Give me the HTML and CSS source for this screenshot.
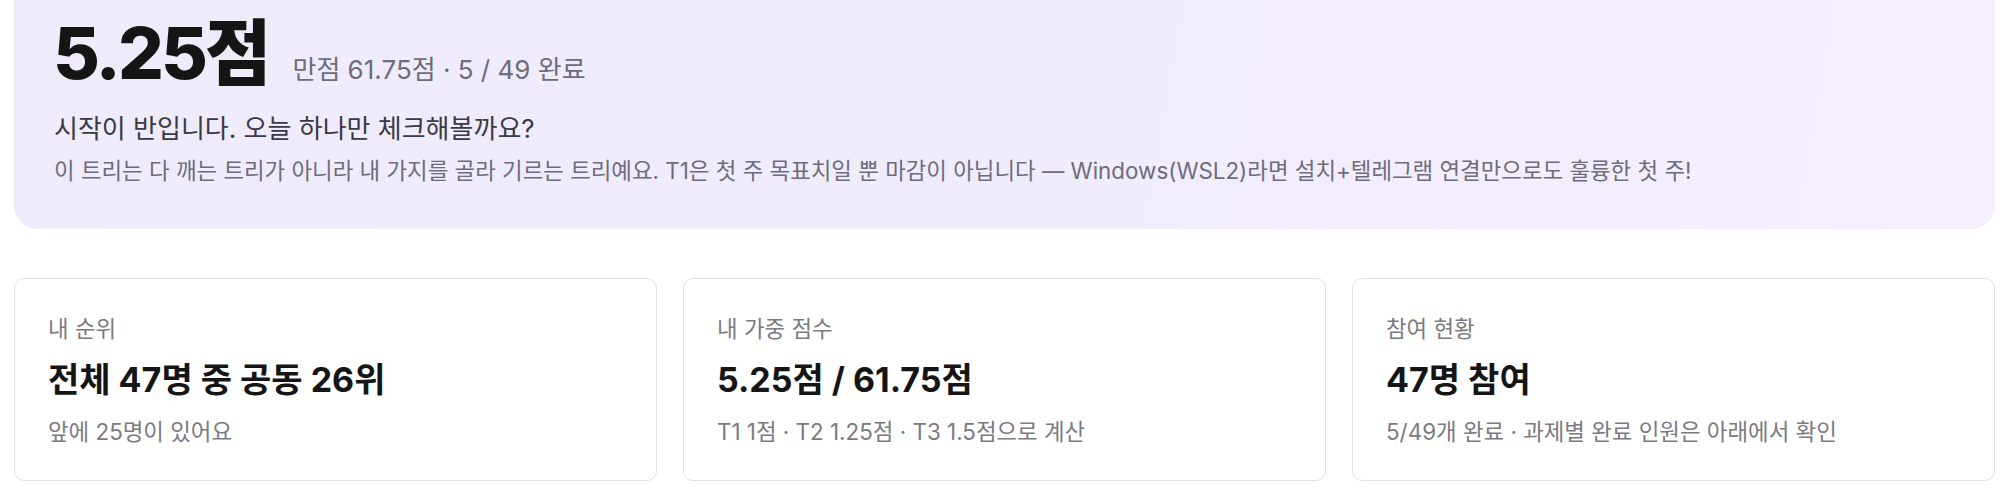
FILE: index.html
```html
<!DOCTYPE html>
<html lang="ko">
<head>
<meta charset="utf-8">
<title>내 점수</title>
<link rel="stylesheet" href="styles.css">
</head>
<body>
<main class="page">
  <section class="hero">
    <div class="hero-head">
      <h1 class="hero-score">5.25점</h1>
      <span class="hero-meta">만점 61.75점 · 5 / 49 완료</span>
    </div>
    <p class="hero-lead">시작이 반입니다. 오늘 하나만 체크해볼까요?</p>
    <p class="hero-note">이 트리는 다 깨는 트리가 아니라 내 가지를 골라 기르는 트리예요. T1은 첫 주 목표치일 뿐 마감이 아닙니다 — Windows(WSL2)라면 설치+텔레그램 연결만으로도 훌륭한 첫 주!</p>
  </section>
  <section class="stats">
    <div class="card">
      <div class="card-label">내 순위</div>
      <div class="card-value">전체 47명 중 공동 26위</div>
      <div class="card-sub">앞에 25명이 있어요</div>
    </div>
    <div class="card">
      <div class="card-label">내 가중 점수</div>
      <div class="card-value">5.25점 / 61.75점</div>
      <div class="card-sub">T1 1점 · T2 1.25점 · T3 1.5점으로 계산</div>
    </div>
    <div class="card">
      <div class="card-label">참여 현황</div>
      <div class="card-value">47명 참여</div>
      <div class="card-sub">5/49개 완료 · 과제별 완료 인원은 아래에서 확인</div>
    </div>
  </section>
</main>
</body>
</html>
```
FILE: styles.css
```css
* { box-sizing: border-box; }
html, body { margin: 0; padding: 0; background: #ffffff; }
body {
  font-family: Inter, "Noto Sans CJK KR", sans-serif;
  color: #1a1a1a;
}
.page {
  padding: 0 13px 0 14px;
  display: flex;
  flex-direction: column;
  gap: 49px;
}
.hero {
  border-radius: 0 0 24px 24px;
  background: linear-gradient(100deg, #efebfb 0%, #f1ecfc 55%, #f6eefc 100%);
  padding: 17px 40px 43px 39px;
}
.hero-head {
  display: flex;
  align-items: baseline;
  gap: 24px;
}
.hero-score {
  margin: 0;
  font-size: 72px;
  line-height: 72px;
  font-weight: 800;
  letter-spacing: -0.04em;
  color: #151515;
}
.hero-meta {
  font-size: 26px;
  color: #6e6b7b;
}
.hero-lead {
  margin: 24px 0 0;
  padding-left: 1px;
  font-size: 26px;
  line-height: 32px;
  color: #3a3a44;
}
.hero-note {
  margin: 11px 0 0;
  padding-left: 1px;
  font-size: 22.4px;
  line-height: 30px;
  color: #6e6b7b;
}
.stats {
  display: grid;
  grid-template-columns: repeat(3, 1fr);
  gap: 26px;
}
.card {
  border: 1px solid #e1e1e4;
  border-radius: 10px;
  background: #ffffff;
  padding: 36px 33px 34px;
  display: flex;
  flex-direction: column;
}
.card-label {
  font-size: 22.4px;
  line-height: 28px;
  color: #7a7a80;
}
.card-value {
  margin-top: 17px;
  font-size: 34px;
  line-height: 40px;
  font-weight: 700;
  color: #151515;
}
.card-sub {
  margin-top: 18px;
  font-size: 22.4px;
  line-height: 28px;
  color: #7a7a80;
}
```
